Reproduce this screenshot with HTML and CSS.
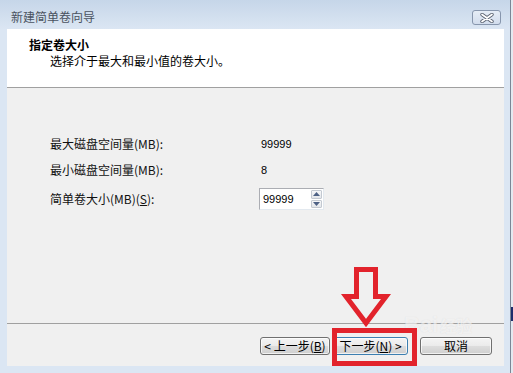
FILE: index.html
```html
<!DOCTYPE html>
<html lang="zh-CN">
<head>
<meta charset="utf-8">
<title>新建简单卷向导</title>
<link rel="stylesheet" href="styles.css">
</head>
<body>
<div class="screen">
  <div class="window">
    <div class="titlebar">
      <span class="title">新建简单卷向导</span>
      <span class="close">
        <svg width="16" height="10" viewBox="0 0 16 10">
          <path d="M3 1.5 L13 8.5 M13 1.5 L3 8.5" stroke="#5a6270" stroke-width="3.4" stroke-linecap="round" fill="none"/>
          <path d="M3 1.5 L13 8.5 M13 1.5 L3 8.5" stroke="#ffffff" stroke-width="1.7" stroke-linecap="round" fill="none"/>
        </svg>
      </span>
    </div>
    <div class="client">
      <div class="header">
        <div class="h-title">指定卷大小</div>
        <div class="h-sub">选择介于最大和最小值的卷大小。</div>
      </div>
      <div class="body">
        <div class="grid">
          <span class="label">最大磁盘空间量(MB):</span>
          <span class="value">99999</span>
          <span class="label">最小磁盘空间量(MB):</span>
          <span class="value">8</span>
          <span class="label">简单卷大小(MB)(<u>S</u>):</span>
          <span class="spin">
            <span class="spin-text">99999</span>
            <span class="spin-btns">
              <span class="spin-btn"><svg width="7" height="4" viewBox="0 0 7 4"><path d="M0 4 L3.5 0 L7 4Z" fill="#4d6185"/></svg></span>
              <span class="spin-btn"><svg width="7" height="4" viewBox="0 0 7 4"><path d="M0 0 L3.5 4 L7 0Z" fill="#4d6185"/></svg></span>
            </span>
          </span>
        </div>
      </div>
      <div class="footer">
        <span class="btn btn-back">&lt; 上一步(<u>B</u>)</span>
        <span class="btn btn-next">下一步(<u>N</u>) &gt;</span>
        <span class="btn btn-cancel">取消</span>
      </div>
    </div>
  </div>
  <div class="edge"></div>

  <span class="watermark">Bai<span class="wm-small">经验</span></span>
  <svg class="annotation" width="513" height="373" viewBox="0 0 513 373">
    <path d="M356.5 269.5 L375.5 269.5 L375.5 296.5 L386 296.5 L366 323 L346 296.5 L356.5 296.5 Z" fill="none" stroke="#e2232c" stroke-width="5" stroke-linejoin="miter"/>
    <rect x="334.5" y="330.5" width="80" height="33" fill="none" stroke="#e2232c" stroke-width="5"/>
  </svg>
</div>
</body>
</html>
```

FILE: styles.css
```css
html, body {
  margin: 0;
  padding: 0;
  width: 513px;
  height: 373px;
  overflow: hidden;
  background: #dbe6f3;
}

.screen {
  position: relative;
  display: flex;
  width: 513px;
  height: 373px;
  font-family: "Noto Sans CJK SC", "Liberation Sans", sans-serif;
  font-size: 12px;
  color: #000;
}

.window {
  width: 510px;
  height: 373px;
  box-sizing: border-box;
  padding: 0 6px 7px 7px;
  display: flex;
  flex-direction: column;
  background: linear-gradient(#c6d6e9 0px, #d3e0ef 18px, #dbe6f3 29px, #dbe6f3 100%);
}

.edge {
  width: 3px;
  height: 373px;
  box-sizing: border-box;
  border-left: 1px solid #7b8696;
  background: linear-gradient(#e4e9f0 0px, #e4e9f0 307px, #1d2c6b 307px, #1d2c6b 321px, #e4e9f0 321px);
}

.titlebar {
  height: 29px;
  display: flex;
  align-items: flex-start;
}

.title {
  margin: 9px 0 0 4px;
  line-height: 16px;
  color: #4a5260;
  font-size: 12px;
}

.close {
  margin: 10px 3px 0 auto;
  width: 29px;
  height: 15px;
  box-sizing: border-box;
  border: 1px solid #8796ad;
  border-radius: 3px;
  background: linear-gradient(#e6edf6, #d2dded);
  display: flex;
  align-items: center;
  justify-content: center;
}

.client {
  width: 497px;
  height: 337px;
  display: flex;
  flex-direction: column;
  background: #f0f0f0;
}

.header {
  height: 59px;
  box-sizing: border-box;
  background: #fff;
  border-bottom: 1px solid #a0a0a0;
  padding: 8px 0 0 22px;
}

.h-title {
  font-weight: bold;
  line-height: 16px;
  font-size: 12px;
}

.h-sub {
  padding-left: 21px;
  line-height: 15px;
}

.body {
  height: 235px;
  box-sizing: border-box;
  padding: 48px 0 0 43px;
}

.grid {
  display: grid;
  grid-template-columns: 209px 70px;
  grid-template-rows: 16px 16px 22px;
  row-gap: 10px;
  align-items: center;
}

.label {
  line-height: 16px;
  color: #111;
}

.value {
  padding-left: 2px;
  font-family: "Liberation Sans", sans-serif;
  font-size: 11px;
  line-height: 16px;
}

.spin {
  width: 65px;
  height: 22px;
  box-sizing: border-box;
  border: 1px solid #abadb3;
  border-right-color: #e3e9ef;
  border-bottom-color: #e3e9ef;
  background: #fff;
  display: flex;
  align-items: stretch;
}

.spin-text {
  flex: 1;
  padding-left: 3px;
  font-family: "Liberation Sans", sans-serif;
  font-size: 11px;
  line-height: 20px;
}

.spin-btns {
  width: 11px;
  display: flex;
  flex-direction: column;
  padding: 1px 1px 1px 0;
  gap: 1px;
}

.spin-btn {
  flex: 1;
  box-sizing: border-box;
  border: 1px solid #c3c9d1;
  border-radius: 1px;
  background: linear-gradient(#f6f7f9, #e3e6ea);
  display: flex;
  align-items: center;
  justify-content: center;
}

.footer {
  height: 43px;
  box-sizing: border-box;
  border-top: 1px solid #a0a0a0;
  padding: 13px 12px 0 0;
  display: flex;
  justify-content: flex-end;
  align-items: flex-start;
}

.btn {
  height: 18px;
  box-sizing: border-box;
  border: 1px solid #707070;
  border-radius: 3px;
  background: linear-gradient(#f4f4f4 0%, #ebebeb 48%, #dddddd 52%, #cfcfcf 100%);
  box-shadow: inset 0 0 0 1px rgba(255, 255, 255, 0.7);
  font-size: 12px;
  line-height: 16px;
  text-align: center;
  white-space: nowrap;
}

.btn-back {
  width: 70px;
}

.btn-next {
  width: 75px;
  margin-left: 3px;
  border-color: #3c7fb1;
}

.btn-cancel {
  width: 72px;
  margin-left: 12px;
}

.watermark {
  position: absolute;
  left: 404px;
  top: 313px;
  font-family: "Liberation Sans", sans-serif;
  font-size: 22px;
  font-weight: bold;
  color: rgba(255, 255, 255, 0.6);
  text-shadow: 0 0 1px rgba(140, 140, 140, 0.22);
  line-height: 24px;
}

.wm-small {
  font-family: "Noto Sans CJK SC", sans-serif;
  font-size: 16px;
  margin-left: 2px;
}

.annotation {
  position: absolute;
  left: 0;
  top: 0;
  pointer-events: none;
}
```
